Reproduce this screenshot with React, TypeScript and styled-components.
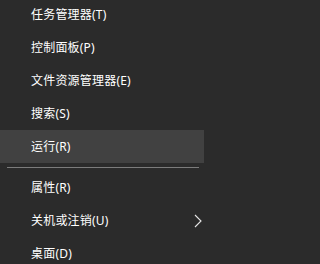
import React from 'react';
import styled, { createGlobalStyle, css } from 'styled-components';

const GlobalStyle = createGlobalStyle`
  html, body {
    margin: 0;
    padding: 0;
    background-color: #2b2b2b;
    overflow: hidden;
  }
`;

const Menu = styled.div`
  display: flex;
  flex-direction: column;
  width: 204px;
  height: 264px;
  overflow: hidden;
  background-color: #2b2b2b;
  font-family: 'Noto Sans', 'Noto Sans CJK SC', sans-serif;
  font-size: 12px;
  color: #ffffff;
`;

const Group = styled.div`
  display: flex;
  flex-direction: column;
  margin-top: -2px;
`;

const Item = styled.div<{ $active?: boolean }>`
  display: flex;
  align-items: center;
  justify-content: space-between;
  height: 33px;
  flex-shrink: 0;
  padding: 0 2px 0 31px;

  ${props =>
    props.$active &&
    css`
      background-color: #414141;
    `}
`;

const Label = styled.span`
  line-height: 1;
  white-space: nowrap;
  letter-spacing: 0.2px;
`;

const Separator = styled.div`
  flex-shrink: 0;
  height: 1px;
  margin: 4px 5px 3.5px 7px;
  background-color: #7c7c7c;
`;

const Chevron = () => (
  <svg width="8" height="14" viewBox="0 0 8 14">
    <path d="M1 1 L7 7 L1 13" fill="none" stroke="#e6e6e6" strokeWidth="1.1" />
  </svg>
);

const top = ['任务管理器(T)', '控制面板(P)', '文件资源管理器(E)', '搜索(S)'];

export default function App(): React.ReactElement {
  return (
    <>
      <GlobalStyle />
      <Menu>
        <Group>
          {top.map(t => (
            <Item key={t}>
              <Label>{t}</Label>
            </Item>
          ))}
          <Item $active>
            <Label>运行(R)</Label>
          </Item>
          <Separator />
          <Item>
            <Label>属性(R)</Label>
          </Item>
          <Item>
            <Label>关机或注销(U)</Label>
            <Chevron />
          </Item>
          <Item>
            <Label>桌面(D)</Label>
          </Item>
        </Group>
      </Menu>
    </>
  );
}
